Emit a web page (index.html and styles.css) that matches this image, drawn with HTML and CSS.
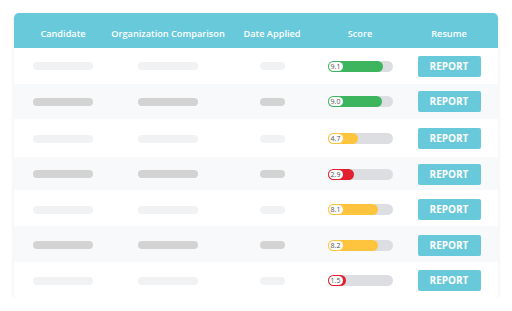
FILE: index.html
```html
<!DOCTYPE html>
<html>
<head>
<meta charset="utf-8">
<link rel="stylesheet" href="styles.css">
</head>
<body>
<div class="card">
  <div class="row head">
    <div class="c1">Candidate</div>
    <div class="c2">Organization Comparison</div>
    <div class="c3">Date Applied</div>
    <div class="c4">Score</div>
    <div class="c5">Resume</div>
  </div>
  <div class="row odd r1">
    <div class="c1"><span class="ph long"></span></div>
    <div class="c2"><span class="ph long"></span></div>
    <div class="c3"><span class="ph short"></span></div>
    <div class="c4"><div class="track"><div class="fill green" style="width:86%"><span class="badge">9.1</span></div></div></div>
    <div class="c5"><span class="btn">REPORT</span></div>
  </div>
  <div class="row even r2">
    <div class="c1"><span class="ph long"></span></div>
    <div class="c2"><span class="ph long"></span></div>
    <div class="c3"><span class="ph short"></span></div>
    <div class="c4"><div class="track"><div class="fill green" style="width:84%"><span class="badge">9.0</span></div></div></div>
    <div class="c5"><span class="btn">REPORT</span></div>
  </div>
  <div class="row odd r3">
    <div class="c1"><span class="ph long"></span></div>
    <div class="c2"><span class="ph long"></span></div>
    <div class="c3"><span class="ph short"></span></div>
    <div class="c4"><div class="track"><div class="fill yellow" style="width:47%"><span class="badge">4.7</span></div></div></div>
    <div class="c5"><span class="btn">REPORT</span></div>
  </div>
  <div class="row even r4">
    <div class="c1"><span class="ph long"></span></div>
    <div class="c2"><span class="ph long"></span></div>
    <div class="c3"><span class="ph short"></span></div>
    <div class="c4"><div class="track"><div class="fill red" style="width:40%"><span class="badge">2.9</span></div></div></div>
    <div class="c5"><span class="btn">REPORT</span></div>
  </div>
  <div class="row odd r5">
    <div class="c1"><span class="ph long"></span></div>
    <div class="c2"><span class="ph long"></span></div>
    <div class="c3"><span class="ph short"></span></div>
    <div class="c4"><div class="track"><div class="fill yellow" style="width:77%"><span class="badge">8.1</span></div></div></div>
    <div class="c5"><span class="btn">REPORT</span></div>
  </div>
  <div class="row even r6">
    <div class="c1"><span class="ph long"></span></div>
    <div class="c2"><span class="ph long"></span></div>
    <div class="c3"><span class="ph short"></span></div>
    <div class="c4"><div class="track"><div class="fill yellow" style="width:77%"><span class="badge">8.2</span></div></div></div>
    <div class="c5"><span class="btn">REPORT</span></div>
  </div>
  <div class="row odd r7">
    <div class="c1"><span class="ph long"></span></div>
    <div class="c2"><span class="ph long"></span></div>
    <div class="c3"><span class="ph short"></span></div>
    <div class="c4"><div class="track"><div class="fill red" style="width:28%"><span class="badge">1.5</span></div></div></div>
    <div class="c5"><span class="btn">REPORT</span></div>
  </div>
</div>
</body>
</html>
```
FILE: styles.css
```css
html, body {
  margin: 0;
  padding: 0;
  background: #ffffff;
}
body {
  padding: 13px 14px 0 14px;
  font-family: "Open Sans", "Liberation Sans", sans-serif;
}
.card {
  width: 484px;
  background: #ffffff;
  border-radius: 5px 5px 3px 3px;
  box-shadow: 0 1px 4px rgba(0, 0, 0, 0.09);
  overflow: hidden;
}
.row {
  display: grid;
  grid-template-columns: 98px 112px 96px 80px 98px;
  height: 36px;
  align-items: center;
}
.row > div {
  display: flex;
  justify-content: center;
  align-items: center;
}
.r1 { height: 36px; }
.r2 { height: 35px; }
.r3 { height: 38px; padding-top: 1px; box-sizing: border-box; }
.r4 { height: 33px; padding-top: 1px; box-sizing: border-box; }
.r5 { height: 36px; padding-top: 3px; box-sizing: border-box; }
.r6 { height: 36px; padding-top: 2px; box-sizing: border-box; }
.r7 { height: 36px; padding-top: 1px; box-sizing: border-box; }
.head {
  height: 35px;
  background: #67c9da;
  color: #ffffff;
  font-size: 9.2px;
  font-weight: 600;
  white-space: nowrap;
}
.head > div {
  padding-top: 6px;
}
.odd {
  background: #ffffff;
}
.even {
  background: #f8f9fa;
}
.ph {
  display: block;
  height: 8px;
  border-radius: 4px;
}
.ph.long { width: 60px; }
.ph.short { width: 25px; }
.odd .ph { background: #f1f2f4; }
.even .ph { background: #d3d3d3; }
.track {
  width: 65px;
  height: 11px;
  border-radius: 6px;
  background: #dcdee2;
  display: flex;
}
.fill {
  height: 11px;
  border-radius: 6px;
  box-sizing: border-box;
  display: flex;
  align-items: center;
  padding-left: 1px;
}
.green { background: #3db55f; }
.yellow { background: #ffc43d; }
.red { background: #e21f2f; }
.badge {
  display: block;
  width: 14px;
  height: 9px;
  line-height: 9px;
  border-radius: 5px;
  background: #ffffff;
  color: #505050;
  font-size: 7px;
  text-align: center;
}
.btn {
  display: block;
  width: 63px;
  height: 21px;
  line-height: 21px;
  border-radius: 2px;
  background: #67c9da;
  color: #ffffff;
  font-size: 10px;
  font-weight: 700;
  text-align: center;
}
```
